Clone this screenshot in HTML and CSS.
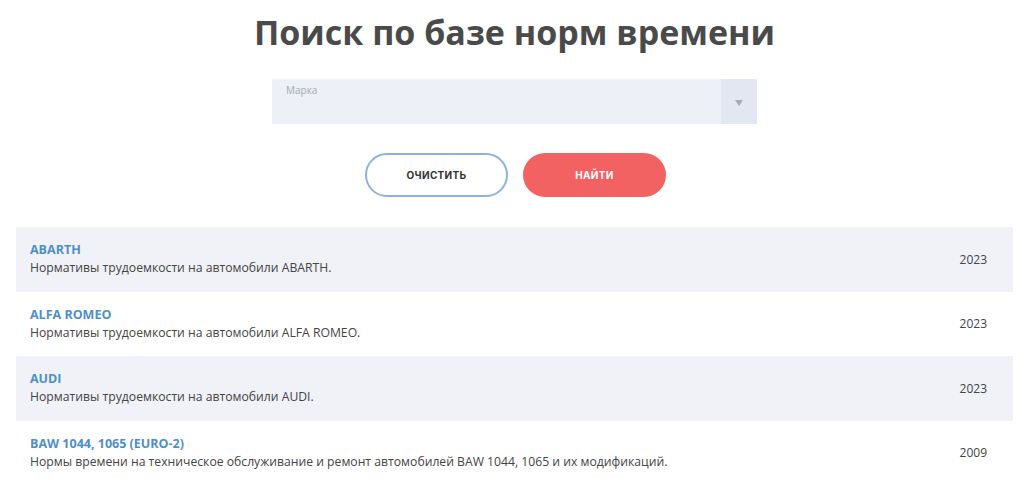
FILE: index.html
```html
<!DOCTYPE html>
<html lang="ru">
<head>
<meta charset="utf-8">
<link rel="stylesheet" href="styles.css">
</head>
<body>
<div class="page">
  <h1 class="title">Поиск по базе норм времени</h1>
  <div class="select">
    <span class="select-label">Марка</span>
    <span class="select-arrow"><svg width="8" height="6" viewBox="0 0 8 6"><path d="M0 0H8L4 6Z" fill="#a3adbf"/></svg></span>
  </div>
  <div class="buttons">
    <button class="btn btn-clear">ОЧИСТИТЬ</button>
    <button class="btn btn-find">НАЙТИ</button>
  </div>
  <div class="list">
    <div class="row alt">
      <div class="info"><div class="name">ABARTH</div><div class="desc">Нормативы трудоемкости на автомобили ABARTH.</div></div>
      <div class="year">2023</div>
    </div>
    <div class="row">
      <div class="info"><div class="name">ALFA ROMEO</div><div class="desc">Нормативы трудоемкости на автомобили ALFA ROMEO.</div></div>
      <div class="year">2023</div>
    </div>
    <div class="row alt">
      <div class="info"><div class="name">AUDI</div><div class="desc">Нормативы трудоемкости на автомобили AUDI.</div></div>
      <div class="year">2023</div>
    </div>
    <div class="row">
      <div class="info"><div class="name">BAW 1044, 1065 (EURO-2)</div><div class="desc">Нормы времени на техническое обслуживание и ремонт автомобилей BAW 1044, 1065 и их модификаций.</div></div>
      <div class="year">2009</div>
    </div>
  </div>
</div>
</body>
</html>
```

FILE: styles.css
```css
* { box-sizing: border-box; }
html, body { margin: 0; padding: 0; background: #fff; }
body { font-family: "Open Sans", "Noto Sans", sans-serif; color: #444; overflow: hidden; }
.page { padding: 0 11px 0 16px; }
.title {
  margin: 0;
  padding-top: 8px;
  height: 79px;
  text-align: center;
  font-size: 34px;
  font-weight: 700;
  color: #4a4a4a;
  line-height: 48px;
}
.select {
  width: 485px;
  height: 45px;
  margin: 0 auto;
  display: flex;
  background: #edf0f7;
}
.select-label {
  flex: 1;
  padding: 4px 0 0 14px;
  font-size: 10px;
  color: #a5a9b2;
}
.select-arrow {
  width: 36px;
  background: #e2e7f1;
  display: flex;
  align-items: center;
  justify-content: center;
  padding-top: 2px;
}
.buttons {
  display: flex;
  justify-content: center;
  gap: 15px;
  margin-top: 29px;
  padding-left: 2px;
}
.btn {
  width: 143px;
  height: 44px;
  border-radius: 22px;
  font-family: "Inter", "Roboto", sans-serif;
  font-weight: 700;
  font-size: 10px;
  letter-spacing: 0.3px;
  cursor: pointer;
}
.btn-clear { background: #fff; border: 2px solid #8ab4de; color: #333; }
.btn-find { background: #f36262; border: none; color: #fff; }
.list { margin-top: 30px; }
.row {
  display: flex;
  align-items: center;
  height: 64.5px;
  padding: 0 26px 0 14px;
}
.row.alt { background: #f0f2f7; }
.info { flex: 1; padding-top: 1px; }
.name { font-size: 12.5px; font-weight: 700; color: #4f8fc6; line-height: 17px; }
.desc { font-size: 12.2px; color: #444; line-height: 20px; }
.year { font-size: 12px; color: #444; }
```
